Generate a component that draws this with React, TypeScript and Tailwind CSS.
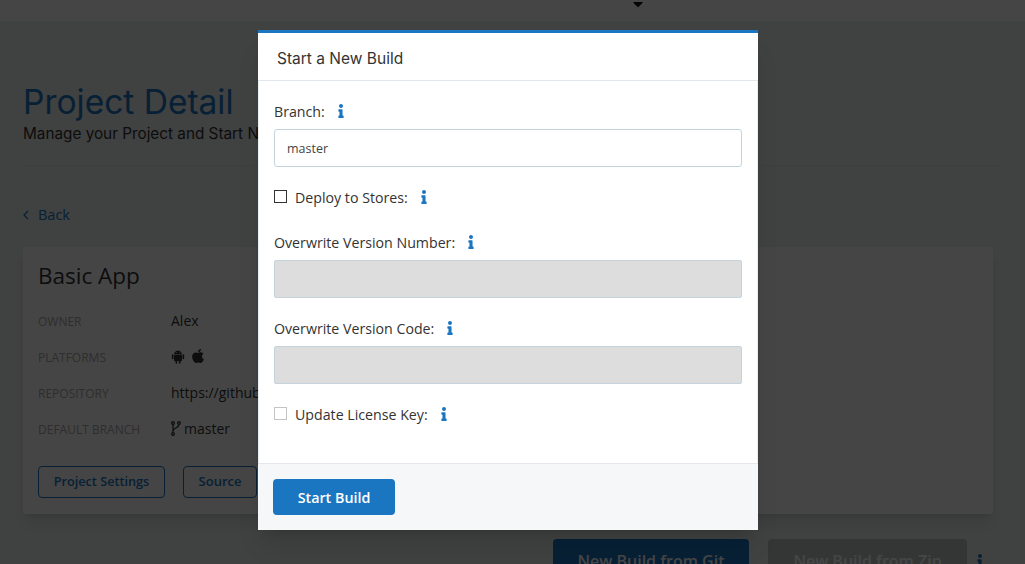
import { FaApple, FaInfo, FaCaretDown } from 'react-icons/fa';
import { IoLogoAndroid } from 'react-icons/io';

const sans = { fontFamily: '"Open Sans", sans-serif' };

function InfoIcon({ className = '' }: { className?: string }) {
  return <FaInfo className={`text-[#1b76c2] w-[14px] h-[14px] ${className}`} />;
}

function BranchIcon() {
  return (
    <svg width="10" height="15" viewBox="0 0 10 15" fill="none" stroke="currentColor" strokeWidth="1.3">
      <circle cx="2" cy="2" r="1.3" />
      <circle cx="8" cy="2" r="1.3" />
      <circle cx="2" cy="13" r="1.3" />
      <path d="M2 3.5V11.5M8 3.5C8 7 2.5 6.5 2 10" />
    </svg>
  );
}

function InfoRow({ label, children }: { label: string; children: React.ReactNode }) {
  return (
    <div className="flex items-center h-[36px]">
      <div className="w-[133px] pt-[3px] text-[12px] uppercase text-[#aaaaaa]">{label}</div>
      <div className="flex items-center gap-[3px] text-[14px] text-[#333333] whitespace-nowrap">{children}</div>
    </div>
  );
}

function Page() {
  return (
    <div className="h-[564px] overflow-hidden bg-[#edeff0]">
      <div className="h-[21px] bg-white flex justify-end pr-[379px] text-[#111111] text-[16px] leading-[8px]">
        <FaCaretDown className="-mt-[4px]" />
      </div>
      <div className="px-[23px]">
        <h1 className="mt-[59px] text-[33.5px] leading-[44px] text-[#1b76c2] font-['Inter',sans-serif]">Project Detail</h1>
        <p className="-mt-[1px] text-[15.3px] leading-[22px] text-[#333333] font-['Inter',sans-serif]">Manage your Project and Start New Builds</p>
        <div className="mt-[20px] border-t border-[#e3e5e6]" />
        <div className="mt-[38px] flex items-center gap-[9px] text-[14.5px] text-[#1b76c2]">
          <svg width="6" height="10" viewBox="0 0 6 10" fill="none" stroke="currentColor" strokeWidth="1.2">
            <path d="M5 1L1 5L5 9" />
          </svg>
          <span>Back</span>
        </div>
        <div className="mt-[21px] w-[970px] h-[267px] bg-white rounded-[3px] pl-[15px] pt-[12px] shadow-lg">
          <div className="text-[22.5px] leading-[34px] text-[#333333]">Basic App</div>
          <div className="mt-[10px]">
            <InfoRow label="Owner">Alex</InfoRow>
            <InfoRow label="Platforms">
              <IoLogoAndroid className="w-[18px] h-[18px] -ml-[2px]" />
              <FaApple className="w-[16px] h-[16px] -mt-[2px]" />
            </InfoRow>
            <InfoRow label="Repository">https://github.com/ionic-team/basic-app</InfoRow>
            <InfoRow label="Default Branch">
              <BranchIcon />
              master
            </InfoRow>
          </div>
          <div className="mt-[19px] flex gap-[18px]">
            <div className="w-[127px] h-[32px] rounded-[4px] border border-[#1b76c2] text-[#1b76c2] text-[12.7px] font-semibold flex items-center justify-center">Project Settings</div>
            <div className="w-[74px] h-[32px] rounded-[4px] border border-[#1b76c2] text-[#1b76c2] text-[13px] font-semibold flex items-center justify-center">Source</div>
          </div>
        </div>
        <div className="mt-[25px] flex">
          <div className="ml-[530px] w-[196px] h-[44px] rounded-[4px] bg-[#1b76c2] text-white text-[16px] font-semibold flex items-center justify-center">New Build from Git</div>
          <div className="ml-[19px] w-[199px] h-[44px] rounded-[4px] bg-[#c0c8c8] text-white text-[16px] font-semibold flex items-center justify-center">New Build from Zip</div>
          <FaInfo className="ml-[6px] mt-[15px] w-[14px] h-[14px] text-[#1b76c2]" />
        </div>
      </div>
    </div>
  );
}

function Label({ text }: { text: string }) {
  return (
    <div className="flex items-center gap-[9px] h-[20px] text-[14.2px] leading-[20px] text-[#333333]">
      <span className="pt-[2px]">{text}</span>
      <InfoIcon />
    </div>
  );
}

function Modal() {
  return (
    <div className="w-[500px] h-[500px] bg-white border-t-[3px] border-[#1b76c2] shadow-xl flex flex-col">
      <div className="h-[48px] shrink-0 pt-[5px] border-b border-[#e1e7ec] pl-[19px] flex items-center text-[15.5px] text-[#333333] font-['Inter',sans-serif]">
        Start a New Build
      </div>
      <div className="flex-1 border-x border-[#e8edf1] pl-[15px] pr-[15px]">
        <div className="mt-[20px]">
          <Label text="Branch:" />
        </div>
        <div className="mt-[8px] h-[38px] pt-[2px] rounded-[3px] border border-[#c5d3dc] pl-[12px] flex items-center text-[12.5px] text-[#444444]">master</div>
        <div className="mt-[20px] flex items-center gap-[8px]">
          <div className="w-[13px] h-[13px] mb-[2px] border border-[#333333]" />
          <Label text="Deploy to Stores:" />
        </div>
        <div className="mt-[25px]">
          <Label text="Overwrite Version Number:" />
        </div>
        <div className="mt-[8px] h-[38px] rounded-[2px] border border-[#c5d3dc] bg-[#dddddd]" />
        <div className="mt-[20px]">
          <Label text="Overwrite Version Code:" />
        </div>
        <div className="mt-[8px] h-[38px] rounded-[2px] border border-[#c5d3dc] bg-[#dddddd]" />
        <div className="mt-[20px] flex items-center gap-[8px]">
          <div className="w-[13px] h-[13px] mb-[2px] border border-[#c4c4c4]" />
          <Label text="Update License Key:" />
        </div>
      </div>
      <div className="h-[67px] shrink-0 border-t border-[#e4e7eb] bg-[#f5f7f9] pl-[15px] pt-[15px]">
        <div className="w-[122px] h-[36px] pt-[1px] rounded-[4px] bg-[#1b76c2] text-white text-[14.3px] font-semibold flex items-center justify-center">Start Build</div>
      </div>
    </div>
  );
}

export default function App() {
  return (
    <div className="relative h-[564px] overflow-hidden" style={sans}>
      <Page />
      <div className="absolute inset-0 bg-black/[.73] pl-[258px] pt-[30px]">
        <Modal />
      </div>
    </div>
  );
}
